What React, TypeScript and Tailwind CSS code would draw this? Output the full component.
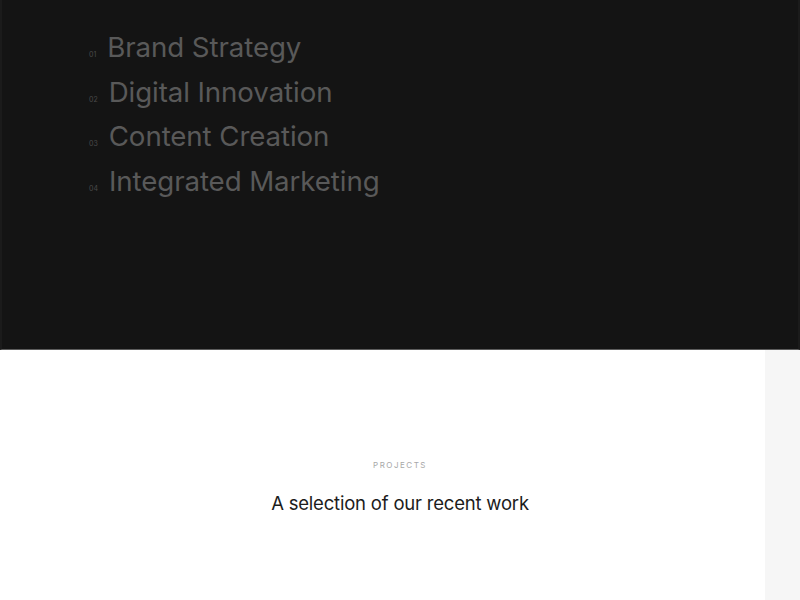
import React from "react";

interface Service {
  num: string;
  title: string;
}

const services: Service[] = [
  { num: "01", title: "Brand Strategy" },
  { num: "02", title: "Digital Innovation" },
  { num: "03", title: "Content Creation" },
  { num: "04", title: "Integrated Marketing" },
];

const App: React.FC = () => {
  return (
    <div className="w-[800px] h-[600px] overflow-hidden bg-white font-['Inter',sans-serif]">
      {/* services list */}
      <section className="h-[350px] bg-[#141414] border-x-2 border-[#1b1b1b] border-b border-b-[#5c5c5c] pt-[25px] pl-[87px]">
        <ul className="flex flex-col">
          {services.map((s) => (
            <li key={s.num} className="flex items-baseline h-[44.5px]">
              <span className="text-[7px] text-[#4a4a4a] mr-[11px]">{s.num}</span>
              <span className="text-[27.7px] leading-[44px] text-[#595959] tracking-[-0.1px]">{s.title}</span>
            </li>
          ))}
        </ul>
      </section>

      {/* projects intro */}
      <section className="flex h-[250px]">
        <div className="flex-1 flex flex-col items-center pt-[109px]">
          <p className="text-[8px] tracking-[1.5px] text-[#a8a8a8] pl-[35px]">PROJECTS</p>
          <h2 className="mt-[19px] pl-[35px] text-[18.5px] text-[#1c1c1c] tracking-[-0.2px]">
            A selection of our recent work
          </h2>
        </div>
        <aside className="w-[35px] bg-[#f6f6f6]" />
      </section>
    </div>
  );
};

export default App;
